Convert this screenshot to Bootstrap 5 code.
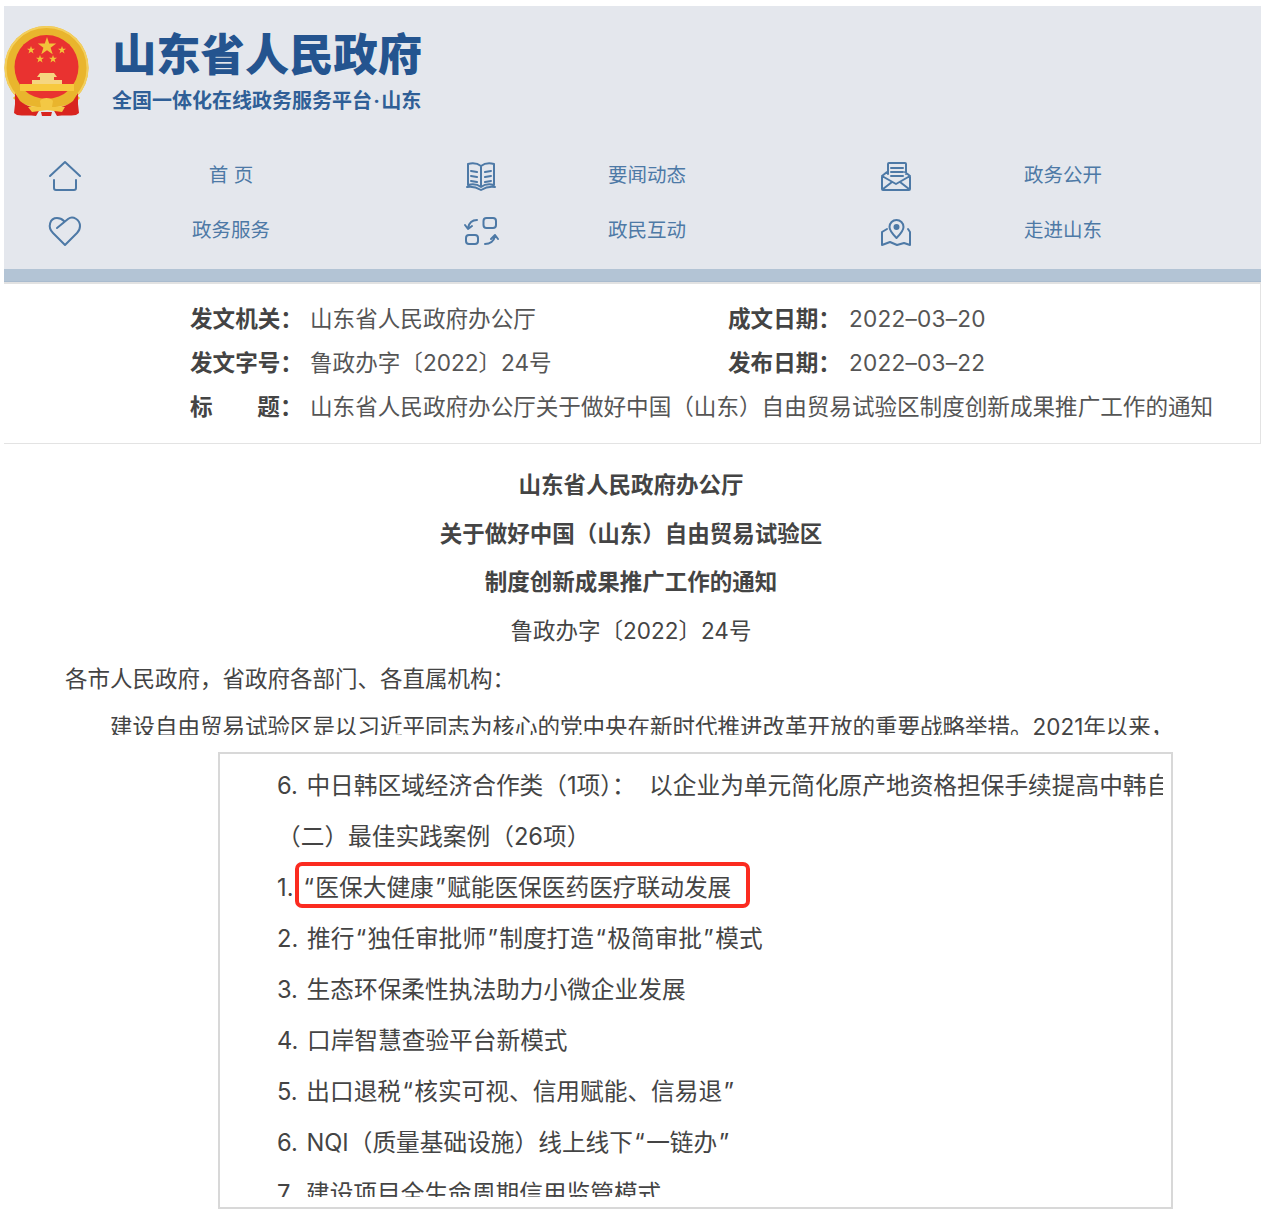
<!DOCTYPE html>
<html lang="zh-CN">
<head>
<meta charset="utf-8">
<title>山东省人民政府</title>
<link rel="stylesheet" href="https://cdn.jsdelivr.net/npm/bootstrap@5.3.0/dist/css/bootstrap.min.css">
<style>
html,body{margin:0;background:#fff}
body{font-family:"Inter","Noto Sans CJK SC",sans-serif;color:#444;width:1276px;height:1220px;overflow:hidden;padding:6px 0 0 4px}
.site-head{width:1257px;height:263px;background:#e4e7ed}
.brand-row{height:126px;padding-top:19px}
.emblem{width:85px;height:92px;flex:none}
.brand-text{margin-left:23px;color:#24548f}
.brand-title{font-size:44.300px;line-height:60px;font-weight:900;white-space:nowrap;margin-top:0}
.brand-sub{font-size:20px;line-height:26px;font-weight:700;color:#2f5f97;white-space:nowrap;margin-top:3px}
.brand-dot{padding:0 1.300px}
.menu-grid{display:grid;grid-template-columns:repeat(3,122px 210px 84px);grid-auto-rows:55px;margin-top:16px}
.menu-ico{display:flex;align-items:center;justify-content:center}
.menu-ico svg{width:40px;height:40px;fill:none;stroke:#4d79a6;stroke-width:2;stroke-linecap:round;stroke-linejoin:round}
.menu-txt{display:flex;align-items:center;justify-content:center;color:#4d79a6;font-size:19.500px}
.head-strip{width:1257px;height:13px;background:#b3c4d5;border-bottom:1px solid #a9bbce}
.meta-box{width:1257px;height:162px;border:1px solid #e3e3e3;border-top-width:2px;border-left:0;border-top-color:#e2e2e2;padding:13px 0 0 186px;font-size:22.580px;color:#555}
.meta-row{height:44px;line-height:44px;white-space:nowrap}
.meta-lab{width:120px;font-weight:700;color:#444;flex:none}
.meta-lab-split{padding-right:7.500px}
.meta-val{width:418px;flex:none}
.meta-lab2{width:121px;font-weight:700;color:#444;flex:none}
.meta-date{letter-spacing:.25px}
.article{font-size:22.500px;color:#444}
.art-center{width:1254px}
.art-line{height:48.500px;line-height:48.500px;white-space:nowrap}
.art-first{padding-top:17px;height:auto}
.art-bold{font-weight:700}
.art-intro{padding-left:61px}
.art-cut{height:31px;overflow:hidden;padding-left:106px;width:1170px;margin-top:0}
.art-cut span{display:block;line-height:30px;margin-top:8px}
.quote-box{width:955px;height:457px;margin:17px 0 0 214px;border:2px solid #d8d8d8;padding:6px 8px 12px 57px;overflow:hidden;background:#fff}
.quote-inner{height:437px;overflow:hidden;font-size:23.700px;color:#444}
.quote-line{height:51px;line-height:51px;white-space:nowrap;position:relative}
.li-no{margin-right:2px}
.li-no-narrow{margin-right:5px}
.qt{padding:0 1.400px}
.hl-frame{position:absolute;left:18px;top:0;width:455px;height:46px;border:4px solid #fb2b20;border-radius:7px}
</style>
</head>
<body>
<header class="site-head">
  <div class="brand-row d-flex align-items-start">
    <svg class="emblem" viewBox="0 0 85 92" role="img" aria-label="国徽">
      <circle cx="42.500" cy="43" r="42" fill="#e9b52d"/>
      <circle cx="42.500" cy="43" r="41" fill="none" stroke="#f3cf5c" stroke-width="2"/>
      <circle cx="42.500" cy="42" r="32" fill="#e93230"/>
      <path d="M43 12l2.200 6.600h7l-5.600 4.100 2.100 6.600-5.700-4.100-5.700 4.100 2.100-6.600-5.600-4.100h7z" fill="#f2c23a"/>
      <path d="M27 21l1 2.800h3l-2.400 1.800.9 2.900-2.500-1.800-2.500 1.800.9-2.900-2.400-1.800h3zM58 21l1 2.800h3l-2.400 1.800.9 2.900-2.500-1.800-2.500 1.800.9-2.900-2.400-1.800h3zM36 30l1 2.800h3l-2.400 1.800.9 2.900-2.500-1.800-2.500 1.800.9-2.900-2.400-1.800h3zM49 30l1 2.800h3l-2.400 1.800.9 2.900-2.500-1.800-2.500 1.800.9-2.900-2.400-1.800h3z" fill="#f2c23a"/>
      <path d="M36 48h14l3 4h-3v3h8v4H28v-4h8v-3h-3z" fill="#f5d680"/>
      <path d="M16 59h54v7H16z" fill="#f7c93e"/>
      <path d="M13 69c8 11 50 11 59 0l4 4c-8 12-58 12-67 0z" fill="#e9b52d"/>
      <path d="M11 68l5 8c6 5 14 7 20 8l-4 7c-6-1-13 0-19-1l-3-2 1-9zM74 68l-5 8c-6 5-14 7-20 8l4 7c6-1 13 0 19-1l3-2-1-9z" fill="#d9241f"/>
      <path d="M24 82h37l-3 5-15-2-15 2zM36 76c2-4 11-4 13 0l-1 6H37z" fill="#f3c844"/>
      <path d="M37 87h11l-1 4H38z" fill="#d9241f"/>
    </svg>
    <div class="brand-text">
      <div class="brand-title">山东省人民政府</div>
      <div class="brand-sub">全国一体化在线政务服务平台<span class="brand-dot">·</span>山东</div>
    </div>
  </div>
  <nav class="menu-grid">
    <div class="menu-ico"><svg viewBox="45 156 40 40"><path d="M50 176l15-14 15 14M54 180v8q0 2 2 2h18q2 0 2-2v-8"/></svg></div>
    <div class="menu-txt">首&nbsp;页</div><div></div>
    <div class="menu-ico"><svg viewBox="461 155 40 40"><path d="M468 163c4-1 9-1 13 2 4-3 9-3 13-2v21c-4-1-9-1-13 2-4-3-9-3-13-2zM481 165v21M467 186c5-1 9 0 14 3 5-3 9-4 14-3M471 170l6 1M471 175l6 1M471 180l6 1M485 171l6-1M485 176l6-1M485 181l6-1"/></svg></div>
    <div class="menu-txt">要闻动态</div><div></div>
    <div class="menu-ico"><svg viewBox="877 156 40 40"><path d="M888 174v-10q0-1 1-1h16q1 0 1 1v10M891 168h12M891 172h12M891 176h12M887 172l-5 4v13q0 1 1 1h26q1 0 1-1v-13l-5-4M882 176l14 8 14-8M883 189l9-7M909 189l-9-7"/></svg></div>
    <div class="menu-txt">政务公开</div><div></div>
    <div class="menu-ico"><svg viewBox="45 211 40 40"><path d="M57 228l11-9c5-4 12 1 12 7 0 3-1 5-3 7l-12 12-12-12c-6-6-3-15 4-15 3 0 5 1 7 3"/></svg></div>
    <div class="menu-txt">政务服务</div><div></div>
    <div class="menu-ico"><svg viewBox="461 211 40 40"><rect x="483.500" y="218" width="12.500" height="10" rx="3"/><rect x="466" y="235" width="12" height="9" rx="3"/><path d="M477 220c-5 0-8 3-9 8M465 225l3 4 4-3M485 244c5 0 9-3 10-8M491 239l4-4 3 4"/></svg></div>
    <div class="menu-txt">政民互动</div><div></div>
    <div class="menu-ico"><svg viewBox="877 211 40 40"><path d="M896.500 238c-4-4-7-7-7-11a7 7 0 0 1 14 0c0 4-3 7-7 11z"/><circle cx="896.500" cy="227" r="2" fill="#4d79a6"/><path d="M887 229l-5 3v13l8-3 7 3 7-2 6 2v-13l-2-3"/></svg></div>
    <div class="menu-txt">走进山东</div><div></div>
  </nav>
</header>
<div class="head-strip"></div>
<section class="meta-box">
  <div class="meta-row d-flex"><div class="meta-lab">发文机关：</div><div class="meta-val">山东省人民政府办公厅</div><div class="meta-lab2">成文日期：</div><div class="meta-date">2022–03–20</div></div>
  <div class="meta-row d-flex"><div class="meta-lab">发文字号：</div><div class="meta-val">鲁政办字〔2022〕24号</div><div class="meta-lab2">发布日期：</div><div class="meta-date">2022–03–22</div></div>
  <div class="meta-row d-flex"><div class="meta-lab meta-lab-split d-flex justify-content-between"><span>标</span><span>题：</span></div><div>山东省人民政府办公厅关于做好中国（山东）自由贸易试验区制度创新成果推广工作的通知</div></div>
</section>
<main class="article">
  <div class="text-center art-center">
    <div class="art-line art-bold art-first">山东省人民政府办公厅</div>
    <div class="art-line art-bold">关于做好中国（山东）自由贸易试验区</div>
    <div class="art-line art-bold">制度创新成果推广工作的通知</div>
    <div class="art-line">鲁政办字〔2022〕24号</div>
  </div>
  <div class="art-line art-intro">各市人民政府，省政府各部门、各直属机构：</div>
  <div class="art-cut"><span>建设自由贸易试验区是以习近平同志为核心的党中央在新时代推进改革开放的重要战略举措。2021年以来，</span></div>
  <div class="quote-box">
    <div class="quote-inner">
      <div class="quote-line"><span class="li-no">6.</span> 中日韩区域经济合作类（1项）：&nbsp;&nbsp;以企业为单元简化原产地资格担保手续提高中韩自贸协定利用率</div>
      <div class="quote-line">（二）最佳实践案例（26项）</div>
      <div class="quote-line"><span class="li-no">1.</span> <span class="qt">“</span>医保大健康<span class="qt">”</span>赋能医保医药医疗联动发展<span class="hl-frame"></span></div>
      <div class="quote-line"><span class="li-no">2.</span> 推行<span class="qt">“</span>独任审批师<span class="qt">”</span>制度打造<span class="qt">“</span>极简审批<span class="qt">”</span>模式</div>
      <div class="quote-line"><span class="li-no">3.</span> 生态环保柔性执法助力小微企业发展</div>
      <div class="quote-line"><span class="li-no">4.</span> 口岸智慧查验平台新模式</div>
      <div class="quote-line"><span class="li-no">5.</span> 出口退税<span class="qt">“</span>核实可视、信用赋能、信易退<span class="qt">”</span></div>
      <div class="quote-line"><span class="li-no">6.</span> NQI（质量基础设施）线上线下<span class="qt">“</span>一链办<span class="qt">”</span></div>
      <div class="quote-line"><span class="li-no-narrow">7.</span> 建设项目全生命周期信用监管模式</div>
    </div>
  </div>
</main>
<script src="https://cdn.jsdelivr.net/npm/bootstrap@5.3.0/dist/js/bootstrap.bundle.min.js"></script>
</body>
</html>
